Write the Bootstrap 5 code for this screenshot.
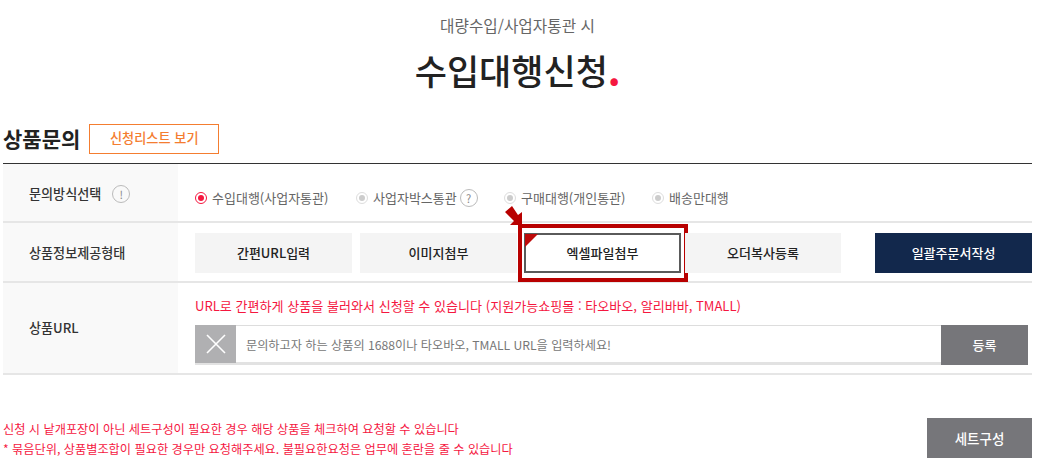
<!DOCTYPE html>
<html lang="ko">
<head>
<meta charset="utf-8">
<title>수입대행신청</title>
<link href="https://cdn.jsdelivr.net/npm/bootstrap@5.3.0/dist/css/bootstrap.min.css" rel="stylesheet">
<style>
html,body{height:466px;overflow:hidden}
body{font-family:"Noto Sans CJK KR","Noto Sans",sans-serif;background:#fff;color:#222;padding:0 16px 0 3px;font-size:13px}
.head-box{padding-top:15px;height:124px}
.head-sub{font-size:15.7px;line-height:22px;color:#666;margin:0}
.head-main{font-size:35px;line-height:50px;font-weight:500;color:#222;margin:8px 0 0}
.head-main i{font-style:normal;color:#f5173f;font-weight:900}
.inq-bar{height:39px;padding-bottom:9px}
.inq-title{font-size:21px;font-weight:700;line-height:30px;margin:-2px 9px 0 0;color:#222}
.list-btn{width:130px;height:30px;border:1px solid #f47d30;border-radius:0;color:#f47d30;font-size:13.2px;font-weight:500;padding:0 0 2px;line-height:26px;background:#fff}
.form-box{border-top:1px solid #333}
.form-row{border-bottom:2px solid #e6e6e6}
.r1{height:59px}.r2{height:60px}.r3{height:92px}
.label-cell{width:175px;flex:none;background:#f9f9f9;padding-left:26px;font-size:13.1px;font-weight:500;color:#333}
.r1 .label-cell,.r2 .label-cell,.r2 .value-cell{padding-top:2px}
.value-cell{padding-left:17px}
.info-mark{width:18px;height:18px;border:1px solid #bbb;border-radius:50%;color:#888;font-size:11px;line-height:16px;text-align:center;display:inline-block;font-weight:400}
.info-gap{margin-left:3px}
.opt{color:#666;font-size:13px;line-height:18px}
.dot{width:12px;height:12px;border-radius:50%;border:1px solid #ddd;display:inline-block;position:relative;margin-right:5px}
.dot::after{content:"";width:6px;height:6px;border-radius:50%;background:#ccc;position:absolute;left:2px;top:2px}
.dot.on{border-color:#f5173f}.dot.on::after{background:#f5173f}
.opts{gap:0;padding-top:11px}
.o1{width:161px}.o2{width:148px}.o3{width:148px}
.tab-btn{width:157px;height:40px;background:#f4f4f4;border:0;border-radius:0;font-size:13px;font-weight:500;color:#222;padding:0;margin-right:8px;position:relative}
.tab-btn.sel{background:#fff;border:2px solid #5a5a5a;margin:0 4px 0 -1px;width:157px}
.tab-btn.sel:hover{background:#fff;border-color:#5a5a5a}
.tab-btn.four{width:156px}
.tab-btn.dark{background:#12284c;color:#fff;margin:0 0 0 26px}
.sel::before{content:"";position:absolute;left:-1px;top:-1px;border-style:solid;border-width:13px 13px 0 0;border-color:#bd0a0a transparent transparent transparent}
.sel-frame{position:absolute;left:-8px;top:-11px;width:170px;height:58px;border:4px solid #b80000;pointer-events:none}
.sel-arrow{position:absolute;left:-22px;top:-30px;width:19px;height:21px}
.url-note{color:#f5173f;font-size:13.07px;line-height:20px;padding-top:13px}
.url-wrap{width:833px;height:40px;margin-top:9px;border-top:1px solid #ddd;border-bottom:3px solid #e2e2e2}
.x-box{width:41px;background:#b0b0b2;flex:none;margin-top:-1px;margin-bottom:-1px}
.url-text{color:#777;font-size:12.17px;padding:2px 0 0 10px;border:0;outline:0;background:#fff;min-width:0}
.url-text::placeholder{color:#777;opacity:1}
.reg-btn{width:87px;flex:none;background:#76767a;color:#fff;border:0;border-radius:0;font-size:13px;font-weight:500;padding:0;margin-top:-1px;margin-bottom:-3px}
.bottom-box{padding-top:43px}
.note-box{padding-top:1px}
.note{color:#f5173f;font-size:12.2px;line-height:20px;margin:0}
.set-btn{width:105px;height:40px;background:#76767a;color:#fff;border:0;border-radius:0;font-size:13.5px;font-weight:500;padding:0}
</style>
</head>
<body>
<div class="head-box text-center">
  <p class="head-sub">대량수입/사업자통관 시</p>
  <h1 class="head-main">수입대행신청<i>.</i></h1>
</div>
<div class="inq-bar d-flex align-items-center">
  <h2 class="inq-title">상품문의</h2>
  <button class="btn list-btn" type="button">신청리스트 보기</button>
</div>
<div class="form-box">
  <div class="form-row r1 d-flex">
    <div class="label-cell d-flex align-items-center gap-2"><span>문의방식선택</span><span class="info-mark info-gap">!</span></div>
    <div class="value-cell d-flex align-items-center opts">
      <label class="opt o1 d-flex align-items-center"><span class="dot on"></span>수입대행(사업자통관)</label>
      <label class="opt o2 d-flex align-items-center"><span class="dot"></span>사업자박스통관<span class="info-mark info-gap">?</span></label>
      <label class="opt o3 d-flex align-items-center"><span class="dot"></span>구매대행(개인통관)</label>
      <label class="opt d-flex align-items-center"><span class="dot"></span>배송만대행</label>
    </div>
  </div>
  <div class="form-row r2 d-flex">
    <div class="label-cell d-flex align-items-center">상품정보제공형태</div>
    <div class="value-cell d-flex align-items-center">
      <button class="btn tab-btn" type="button">간편URL입력</button>
      <button class="btn tab-btn" type="button">이미지첨부</button>
      <button class="btn tab-btn sel" type="button">엑셀파일첨부
        <span class="sel-frame"></span>
        <svg class="sel-arrow" viewBox="0 0 19 21"><path fill="#b80000" d="M1 7 L8 1 L14 10 L18 7 L18 20 L6 20 L10 16 Z"/></svg>
      </button>
      <button class="btn tab-btn four" type="button">오더복사등록</button>
      <button class="btn tab-btn dark" type="button">일괄주문서작성</button>
    </div>
  </div>
  <div class="form-row r3 d-flex">
    <div class="label-cell d-flex align-items-center">상품URL</div>
    <div class="value-cell flex-grow-1">
      <div class="url-note">URL로 간편하게 상품을 불러와서 신청할 수 있습니다 (지원가능쇼핑몰 : 타오바오, 알리바바, TMALL)</div>
      <div class="url-wrap d-flex">
        <div class="x-box d-flex align-items-center justify-content-center">
          <svg width="20" height="20" viewBox="0 0 20 20"><path d="M1 1 L19 19 M19 1 L1 19" stroke="#fff" stroke-width="1.6" fill="none"/></svg>
        </div>
        <input class="url-text flex-grow-1" type="text" placeholder="문의하고자 하는 상품의 1688이나 타오바오, TMALL URL을 입력하세요!">
        <button class="btn reg-btn" type="button">등록</button>
      </div>
    </div>
  </div>
</div>
<div class="bottom-box d-flex justify-content-between align-items-start">
  <div class="note-box">
    <p class="note">신청 시 낱개포장이 아닌 세트구성이 필요한 경우 해당 상품을 체크하여 요청할 수 있습니다</p>
    <p class="note">* 묶음단위, 상품별조합이 필요한 경우만 요청해주세요. 불필요한요청은 업무에 혼란을 줄 수 있습니다</p>
  </div>
  <button class="btn set-btn" type="button">세트구성</button>
</div>
<script src="https://cdn.jsdelivr.net/npm/bootstrap@5.3.0/dist/js/bootstrap.bundle.min.js"></script>
</body>
</html>
